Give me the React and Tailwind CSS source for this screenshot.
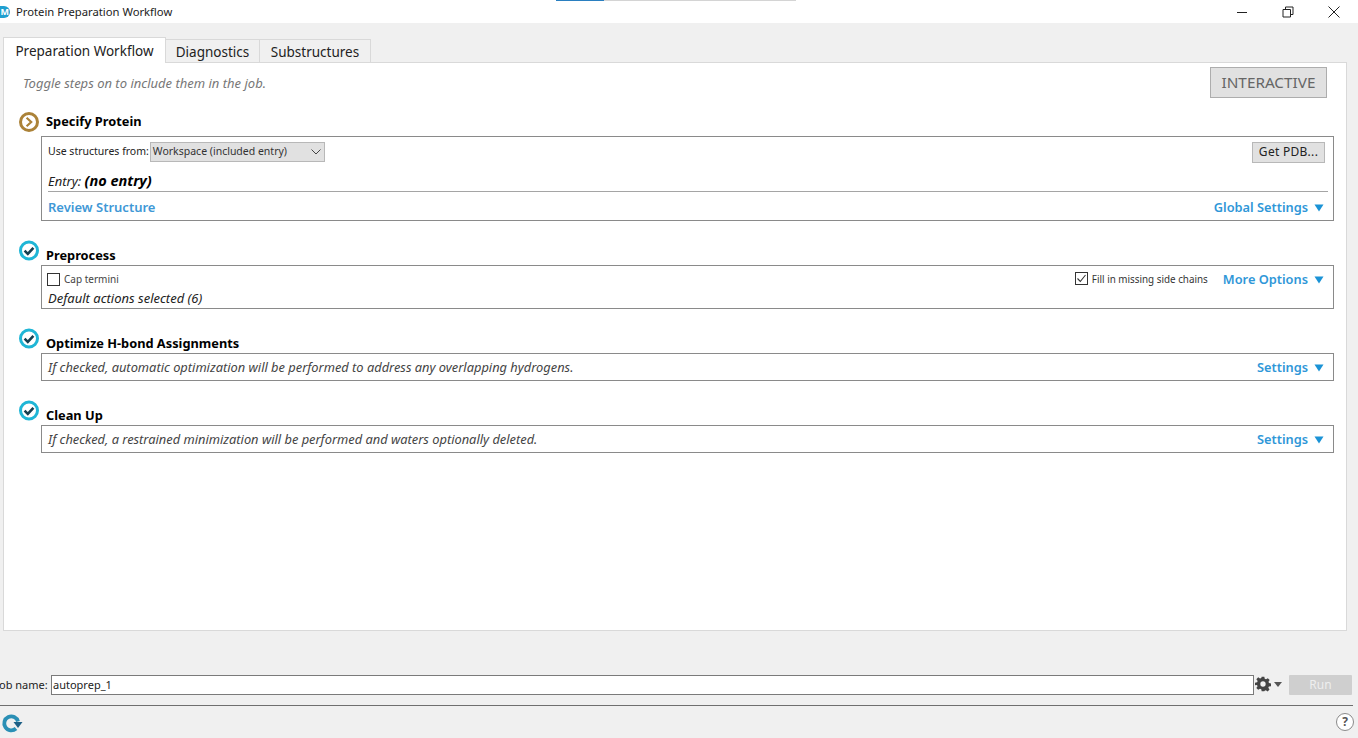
import React from "react";

const font = { fontFamily: '"Noto Sans", "Open Sans", sans-serif' };

function Check() {
  return (
    <svg width="22" height="22" viewBox="0 0 22 22" className="shrink-0">
      <circle cx="11" cy="10.5" r="8.5" fill="#fff" stroke="#1fb6d6" strokeWidth="3" />
      <path d="M6.6 10.6 L9.8 13.8 L15.4 7.8" fill="none" stroke="#163f4f" strokeWidth="2.6" />
    </svg>
  );
}

function Arrow() {
  return (
    <svg width="22" height="22" viewBox="0 0 22 22" className="shrink-0">
      <circle cx="11" cy="11" r="8.5" fill="#fff" stroke="#ab8238" strokeWidth="3" />
      <path d="M8.6 6.8 L13.2 11 L8.6 15.2" fill="none" stroke="#ab8238" strokeWidth="2.2" />
    </svg>
  );
}

function Tri() {
  return (
    <svg width="10" height="8" viewBox="0 0 10 8" className="ml-[6px] mt-[2px]">
      <path d="M0.5 0.5 H9.5 L5 7.5 Z" fill="#1b93d6" />
    </svg>
  );
}

function Link({ children }) {
  return (
    <span className="flex items-center text-[12.8px] font-semibold text-[#2f97d8] leading-none pt-[1px]">
      {children}
      <Tri />
    </span>
  );
}

function Heading({ icon, children, className }) {
  return (
    <div className={"flex items-start pl-[14px] " + className}>
      {icon}
      <span className="ml-[6px] mt-[6px] text-[12.8px] font-bold text-black leading-[18px]">{children}</span>
    </div>
  );
}

function Box({ children, className }) {
  return <div className={"ml-[37px] mr-[12px] border border-[#8a8a8a] bg-white " + className}>{children}</div>;
}

function Step({ text, link }) {
  return (
    <Box className="h-[28px] flex items-center justify-between pl-[6px] pr-[9px]">
      <span className="text-[12.85px] italic text-[#444] pt-[1px]">{text}</span>
      <Link>{link}</Link>
    </Box>
  );
}

export default function App() {
  return (
    <div style={font} className="w-[1358px] h-[738px] overflow-hidden bg-[#f0f0f0] flex flex-col text-[#222]">
      <div className="h-[23px] bg-white flex items-center shrink-0 relative">
        <div className="w-[10px] h-[12px] rounded-r-full bg-[#1f9fd0] text-white text-[9px] leading-[12px] font-bold overflow-hidden flex justify-end pr-[1px]">M</div>
        <span className="ml-[6px] text-[11.25px] text-[#222] leading-none">Protein Preparation Workflow</span>
        <div className="absolute top-0 left-[556px] flex h-[1px]">
          <div className="w-[48px] bg-[#2a7fc0]" />
          <div className="w-[192px] bg-[#d4d4d4]" />
        </div>
        <div className="ml-auto flex items-center">
          <svg width="12" height="12" viewBox="0 0 12 12" className="mr-[34px]"><path d="M1 6.5 H11" stroke="#222" strokeWidth="1" /></svg>
          <svg width="12" height="12" viewBox="0 0 12 12" className="mr-[33px]">
            <path d="M1 3.5 H8.5 V11 H1 Z M3.5 3.5 V1 H11 V8.5 H8.5" fill="none" stroke="#222" strokeWidth="1" />
          </svg>
          <svg width="14" height="14" viewBox="0 0 14 14" className="mr-[17px]"><path d="M1.5 1.5 L12.5 12.5 M12.5 1.5 L1.5 12.5" stroke="#222" strokeWidth="1" /></svg>
        </div>
      </div>

      <div className="h-[15px] shrink-0" />

      <div className="flex items-end h-[24px] pl-[3px] shrink-0 relative z-10">
        <div className="h-[26px] w-[163px] bg-white border border-b-0 border-[#d9d9d9] flex items-center justify-center text-[13.5px] pt-[2px] -mb-[1px]">Preparation Workflow</div>
        <div className="h-[23px] w-[94px] bg-[#f0f0f0] border border-l-0 border-b-0 border-[#d9d9d9] flex items-center justify-center text-[13.5px] pt-[2px]">Diagnostics</div>
        <div className="h-[23px] w-[111px] bg-[#f0f0f0] border border-l-0 border-b-0 border-[#d9d9d9] flex items-center justify-center text-[13.5px] pt-[2px]">Substructures</div>
      </div>

      <div className="ml-[3px] mr-[11px] h-[569px] shrink-0 bg-white border border-[#d9d9d9]">
        <div className="flex justify-between pl-[19px] pr-[18px] pt-[4px] h-[47px]">
          <span className="italic text-[13px] text-[#777] mt-[7px] leading-[18px]">Toggle steps on to include them in the job.</span>
          <div className="w-[117px] h-[31px] mr-[1px] bg-[#e1e1e1] border border-[#adadad] flex items-center justify-center text-[15.3px] text-[#666]">INTERACTIVE</div>
        </div>

        <Heading icon={<Arrow />} className="h-[26px] pt-[1px]">
          <span className="relative -top-[5px]">Specify Protein</span>
        </Heading>
        <Box className="h-[85px] flex flex-col">
          <div className="flex items-center justify-between pl-[6px] pr-[8px] h-[30px] shrink-0">
            <div className="flex items-center">
              <span className="text-[10.5px] text-[#222] mr-[1px]">Use structures from:</span>
              <div className="w-[175px] h-[20px] bg-[#e1e1e1] border border-[#b8b8b8] flex items-center justify-between pl-[2px] pr-[3px] text-[10.5px] text-[#333]">
                Workspace (included entry)
                <svg width="10" height="6" viewBox="0 0 10 6"><path d="M0.5 0.5 L5 5 L9.5 0.5" fill="none" stroke="#444" /></svg>
              </div>
            </div>
            <div className="w-[73px] h-[21px] bg-[#e1e1e1] border border-[#b8b8b8] flex items-center justify-center text-[12px] text-[#222] tracking-[0.3px]">Get PDB...</div>
          </div>
          <div className="pl-[6px] mt-[4px] h-[19px] text-[13px] italic leading-[19px] text-[#222] shrink-0">
            Entry: <b className="text-black text-[14.5px]">(no entry)</b>
          </div>
          <div className="ml-[6px] mr-[5px] mt-[1px] h-[1px] bg-[#a5a5a5] shrink-0" />
          <div className="flex justify-between items-center pl-[6px] pr-[9px] h-[29px] pt-[1px] shrink-0">
            <span className="text-[13px] font-semibold text-[#3f98d6] leading-none">Review Structure</span>
            <Link>Global Settings</Link>
          </div>
        </Box>

        <Heading icon={<Check />} className="h-[25px] mt-[19px]">Preprocess</Heading>
        <Box className="h-[44px] flex flex-col pl-[5px]">
          <div className="flex items-center justify-between pr-[9px] h-[25px] pt-[1px] shrink-0">
            <div className="flex items-center">
              <div className="w-[13px] h-[13px] border border-[#333] bg-white" />
              <span className="ml-[4px] text-[10px] text-[#444]">Cap termini</span>
            </div>
            <div className="flex items-center">
              <div className="w-[13px] h-[13px] border border-[#333] bg-white flex items-center justify-center">
                <svg width="11" height="11" viewBox="0 0 11 11"><path d="M1.5 5.5 L4.3 8.5 L9.5 2" fill="none" stroke="#333" strokeWidth="1.1" /></svg>
              </div>
              <span className="ml-[4px] mr-[15px] text-[9.85px] text-[#333]">Fill in missing side chains</span>
              <Link>More Options</Link>
            </div>
          </div>
          <span className="pl-[1px] -mt-[1px] text-[13px] italic text-[#222] leading-[16px]">Default actions selected (6)</span>
        </Box>

        <Heading icon={<Check />} className="h-[25px] mt-[19px]">Optimize H-bond Assignments</Heading>
        <Step text="If checked, automatic optimization will be performed to address any overlapping hydrogens." link="Settings" />

        <Heading icon={<Check />} className="h-[25px] mt-[19px]">Clean Up</Heading>
        <Step text="If checked, a restrained minimization will be performed and waters optionally deleted." link="Settings" />
      </div>

      <div className="h-[64px] shrink-0 flex items-end pr-[6px]">
        <span className="-ml-[4px] text-[11px] text-[#222] w-[55px] h-[20px] leading-[20px] shrink-0">Job name:</span>
        <div className="flex-1 h-[20px] bg-white border border-[#7a7a7a] text-[11px] leading-[18px] pl-[1px] text-[#222]">autoprep_1</div>
        <svg width="16" height="16" viewBox="0 0 24 24" className="ml-[1px] mb-[3px] shrink-0">
          <path fillRule="evenodd" fill="#444" d="M10 1h4l.6 3.2 1.9.8 2.7-1.8 2.8 2.8-1.8 2.7.8 1.9 3 .6v4l-3.2.6-.8 1.9 1.8 2.7-2.8 2.8-2.7-1.8-1.9.8L14 23h-4l-.6-3.2-1.9-.8-2.7 1.8L2 18l1.8-2.7-.8-1.9L0 14v-4l3.2-.6.8-1.9L2 4.8 4.8 2l2.7 1.8 1.9-.8L10 1Zm2 7a4 4 0 1 0 0 8 4 4 0 0 0 0-8Z" />
        </svg>
        <svg width="8" height="5" viewBox="0 0 8 5" className="ml-[3px] mb-[8px] mr-[7px] shrink-0"><path d="M0 0 H8 L4 5 Z" fill="#555" /></svg>
        <div className="w-[63px] h-[20px] bg-[#cfcfcf] flex items-center justify-center text-[12px] text-[#eee] rounded-[1px]">Run</div>
      </div>

      <div className="h-[1px] mt-[10px] mr-[5px] bg-[#6f6f6f] shrink-0" />

      <div className="flex-1 flex items-start justify-between pr-[4px] pt-[7px]">
        <svg width="22" height="20" viewBox="0 0 22 20" className="ml-[1px]">
          <path d="M17 8.5 A7 7 0 1 0 15 15.5" fill="none" stroke="#2a8fb5" strokeWidth="3.8" />
          <path d="M12.5 9 H21.5 L17 15 Z" fill="#1d5f85" />
        </svg>
        <div className="w-[18px] h-[18px] rounded-full border-[1.5px] border-[#8a8a8a] bg-white flex items-center justify-center text-[12px] font-bold text-[#555] leading-none">?</div>
      </div>
    </div>
  );
}
